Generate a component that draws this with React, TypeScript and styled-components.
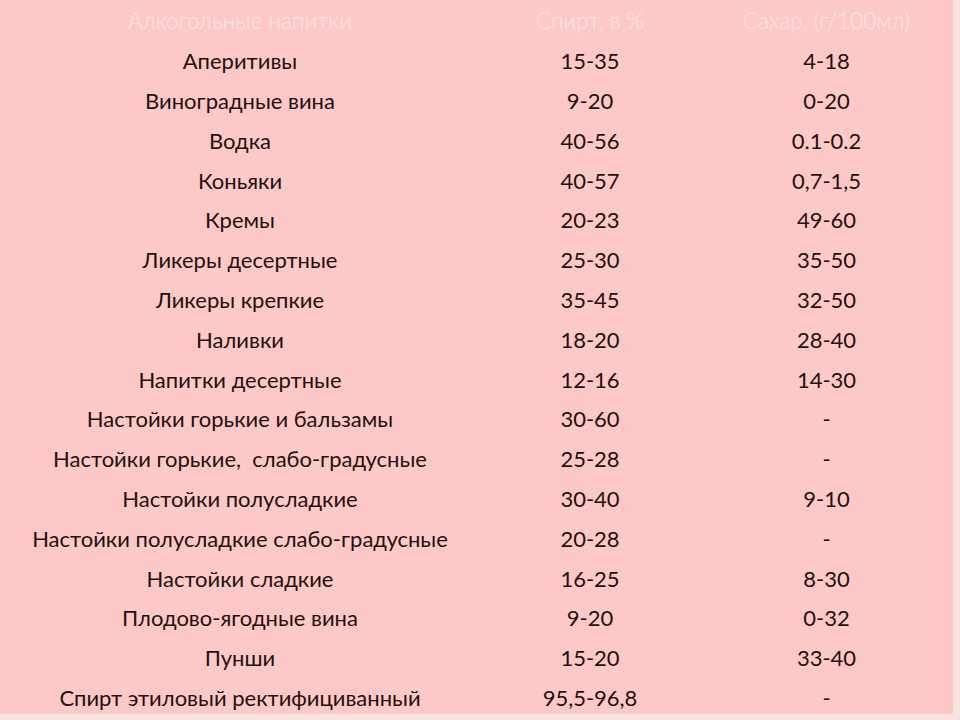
import React from "react";
import styled, { createGlobalStyle } from "styled-components";

const Global = createGlobalStyle`
  html, body { margin: 0; padding: 0; }
  body {
    background: #f9e2e2;
    width: 960px;
    height: 720px;
    overflow: hidden;
  }
`;

const Table = styled.div`
  box-sizing: border-box;
  width: 953px;
  height: 714px;
  overflow: hidden;
  padding-top: 1px;
  background: #fcc9c8;
  display: grid;
  grid-template-columns: 480px 220px 253px;
  grid-auto-rows: 39.8px;
  font-family: Lato, "Open Sans", sans-serif;
`;

const Cell = styled.div<{ $head?: boolean }>`
  display: flex;
  align-items: center;
  justify-content: center;
  white-space: pre;
  font-size: ${(p) => (p.$head ? "22.5px" : "22px")};
  color: ${(p) => (p.$head ? "#fbe8e8" : "#241010")};
  font-weight: ${(p) => (p.$head ? 300 : 400)};
`;

const rows: [string, string, string][] = [
  ["Аперитивы", "15-35", "4-18"],
  ["Виноградные вина", "9-20", "0-20"],
  ["Водка", "40-56", "0.1-0.2"],
  ["Коньяки", "40-57", "0,7-1,5"],
  ["Кремы", "20-23", "49-60"],
  ["Ликеры десертные", "25-30", "35-50"],
  ["Ликеры крепкие", "35-45", "32-50"],
  ["Наливки", "18-20", "28-40"],
  ["Напитки десертные", "12-16", "14-30"],
  ["Настойки горькие и бальзамы", "30-60", "-"],
  ["Настойки горькие,  слабо-градусные", "25-28", "-"],
  ["Настойки полусладкие", "30-40", "9-10"],
  ["Настойки полусладкие слабо-градусные", "20-28", "-"],
  ["Настойки сладкие", "16-25", "8-30"],
  ["Плодово-ягодные вина", "9-20", "0-32"],
  ["Пунши", "15-20", "33-40"],
  ["Спирт этиловый ректифициванный", "95,5-96,8", "-"],
];

export default function App() {
  return (
    <>
      <Global />
      <Table>
        <Cell $head>Алкогольные напитки</Cell>
        <Cell $head>Спирт, в %</Cell>
        <Cell $head>Сахар, (г/100мл)</Cell>
        {rows.map((r, i) => (
          <React.Fragment key={i}>
            <Cell>{r[0]}</Cell>
            <Cell>{r[1]}</Cell>
            <Cell>{r[2]}</Cell>
          </React.Fragment>
        ))}
      </Table>
    </>
  );
}
